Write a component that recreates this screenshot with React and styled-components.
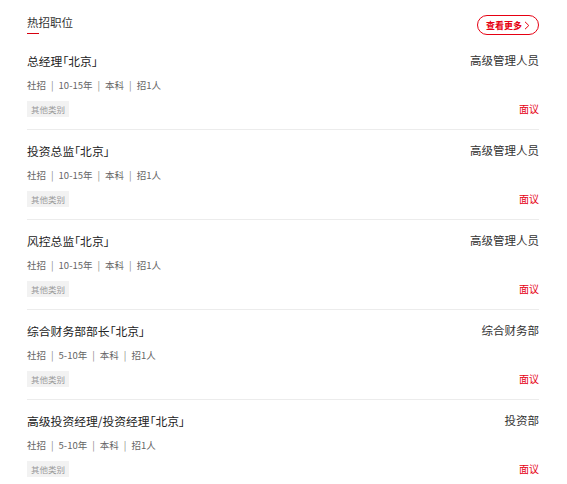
import styled, { createGlobalStyle } from "styled-components"

const jobs = [
  { name: "总经理「北京」", years: "10-15年", dept: "高级管理人员" },
  { name: "投资总监「北京」", years: "10-15年", dept: "高级管理人员" },
  { name: "风控总监「北京」", years: "10-15年", dept: "高级管理人员" },
  { name: "综合财务部部长「北京」", years: "5-10年", dept: "综合财务部" },
  { name: "高级投资经理/投资经理「北京」", years: "5-10年", dept: "投资部" },
]

export default function App() {
  return (
    <>
      <GlobalStyle />
      <Panel>
        <Header>
          <Heading>热招职位</Heading>
          <MoreButton>
            查看更多
            <svg width="6" height="9" viewBox="0 0 6 9">
              <path d="M1 0.8 L4.8 4.5 L1 8.2" fill="none" stroke="#e60012" strokeWidth="1" />
            </svg>
          </MoreButton>
        </Header>
        <ul>
          {jobs.map((j) => (
            <JobRow key={j.name}>
              <Main>
                <JobName>{j.name}</JobName>
                <Meta>
                  <span>社招</span>
                  <Sep>|</Sep>
                  <span>{j.years}</span>
                  <Sep>|</Sep>
                  <span>本科</span>
                  <Sep>|</Sep>
                  <span>招1人</span>
                </Meta>
                <Tag>其他类别</Tag>
              </Main>
              <Side>
                <Dept>{j.dept}</Dept>
                <Salary>面议</Salary>
              </Side>
            </JobRow>
          ))}
        </ul>
      </Panel>
    </>
  )
}

const GlobalStyle = createGlobalStyle`
  body {
    margin: 0;
    background: #fff;
    font-family: "Microsoft YaHei", "Noto Sans CJK SC", "Noto Sans", sans-serif;
  }
  ul {
    margin: 0;
    padding: 0;
    list-style: none;
  }
`

const Panel = styled.div`
  padding: 0 28px 0 27px;
  height: 484px;
  overflow: hidden;
`

const Header = styled.div`
  height: 40px;
  box-sizing: border-box;
  padding-top: 14px;
  display: flex;
  justify-content: space-between;
  align-items: flex-start;
`

const Heading = styled.h2`
  margin: 0;
  font-size: 11.5px;
  line-height: 17px;
  font-weight: normal;
  color: #333;
  &::after {
    content: "";
    display: block;
    width: 12px;
    height: 1px;
    margin-top: 2px;
    background: #d7000f;
  }
`

const MoreButton = styled.a`
  margin-top: 1px;
  width: 62px;
  height: 20px;
  box-sizing: border-box;
  border: 1px solid #e60012;
  border-radius: 10px;
  display: flex;
  align-items: center;
  justify-content: center;
  gap: 2px;
  font-size: 9px;
  font-weight: bold;
  color: #e60012;
  cursor: pointer;
`

const JobRow = styled.li`
  display: flex;
  justify-content: space-between;
  padding: 12px 0;
  border-bottom: 1px solid #ececec;
`

const Main = styled.div`
  display: flex;
  flex-direction: column;
  align-items: flex-start;
`

const JobName = styled.div`
  font-size: 11.8px;
  line-height: 17px;
  color: #222;
  font-feature-settings: "palt";
`

const Meta = styled.div`
  margin-top: 10px;
  font-size: 9.5px;
  line-height: 13px;
  color: #666;
`

const Sep = styled.span`
  margin: 0 5px;
  color: #888;
`

const Tag = styled.span`
  margin-top: 9px;
  height: 16px;
  line-height: 16px;
  padding: 0 4px;
  background: #f2f2f2;
  font-size: 8.5px;
  color: #999;
`

const Side = styled.div`
  display: flex;
  flex-direction: column;
  justify-content: space-between;
  align-items: flex-end;
`

const Dept = styled.div`
  font-size: 11.5px;
  line-height: 17px;
  color: #333;
`

const Salary = styled.div`
  font-size: 10px;
  line-height: 16px;
  color: #e60012;
`
